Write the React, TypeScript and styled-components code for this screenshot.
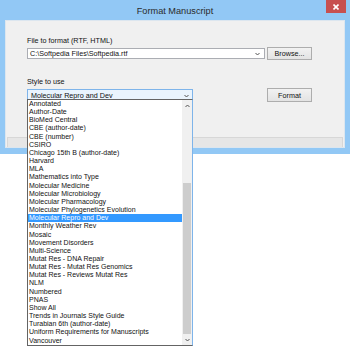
import React from 'react';
import styled, { createGlobalStyle } from 'styled-components';

const styleNames = [
  'Annotated',
  'Author-Date',
  'BioMed Central',
  'CBE (author-date)',
  'CBE (number)',
  'CSIRO',
  'Chicago 15th B (author-date)',
  'Harvard',
  'MLA',
  'Mathematics into Type',
  'Molecular Medicine',
  'Molecular Microbiology',
  'Molecular Pharmacology',
  'Molecular Phylogenetics Evolution',
  'Molecular Repro and Dev',
  'Monthly Weather Rev',
  'Mosaic',
  'Movement Disorders',
  'Multi-Science',
  'Mutat Res - DNA Repair',
  'Mutat Res - Mutat Res Genomics',
  'Mutat Res - Reviews Mutat Res',
  'NLM',
  'Numbered',
  'PNAS',
  'Show All',
  'Trends in Journals Style Guide',
  'Turabian 6th (author-date)',
  'Uniform Requirements for Manuscripts',
  'Vancouver',
];

const selected = 'Molecular Repro and Dev';

const GlobalStyle = createGlobalStyle`
  html, body {
    margin: 0;
    padding: 0;
    background: #ffffff;
  }
  body {
    font-family: 'Liberation Sans', Arial, sans-serif;
  }
`;

const Chevron: React.FC<{ up?: boolean }> = ({ up }) => (
  <svg width="5" height="4" viewBox="0 0 5 4">
    <polyline
      points={up ? '0.5,3 2.5,1 4.5,3' : '0.5,1 2.5,3 4.5,1'}
      fill="none"
      stroke="#555"
      strokeWidth="1"
    />
  </svg>
);

const App: React.FC = () => {
  return (
    <Page>
      <GlobalStyle />
      <Window>
        <TitleBar>
          <span />
          <Title>Format Manuscript</Title>
          <CloseButton>
            <svg width="6" height="6" viewBox="0 0 6 6">
              <path d="M0.5 0.5 L5.5 5.5 M5.5 0.5 L0.5 5.5" stroke="#fff" strokeWidth="1.6" />
            </svg>
          </CloseButton>
        </TitleBar>
        <Content>
          <Form>
            <Label>File to format (RTF, HTML)</Label>
            <FieldRow>
              <ComboInput>
                <span>C:\Softpedia Files\Softpedia.rtf</span>
                <Chevron />
              </ComboInput>
              <Button>Browse...</Button>
            </FieldRow>
            <Label $top={17}>Style to use</Label>
            <FieldRow $align="end">
              <Select>
                <span>{selected}</span>
                <Chevron />
              </Select>
              <Button $tall>Format</Button>
            </FieldRow>
          </Form>
          <Footer />
        </Content>
      </Window>
      <DropList>
        <Items>
          {styleNames.map((name) => (
            <Item key={name} $active={name === selected}>
              {name}
            </Item>
          ))}
        </Items>
        <ScrollBar>
          <ScrollArrow>
            <Chevron up />
          </ScrollArrow>
          <Track>
            <Thumb />
          </Track>
          <ScrollArrow>
            <Chevron />
          </ScrollArrow>
        </ScrollBar>
      </DropList>
    </Page>
  );
};

export default App;

const Page = styled.div`
  position: relative;
  width: 350px;
  height: 346px;
  overflow: hidden;
  background: #ffffff;
`;

const Window = styled.div`
  width: 350px;
  box-sizing: border-box;
  padding: 0 5px 6px;
  background: #92c8f5;
  display: flex;
  flex-direction: column;
`;

const TitleBar = styled.div`
  height: 20px;
  display: grid;
  grid-template-columns: 1fr auto 1fr;
  align-items: center;
`;

const Title = styled.div`
  font-size: 9.2px;
  color: #2b2b2b;
  padding-top: 1px;
`;

const CloseButton = styled.div`
  justify-self: end;
  align-self: start;
  margin-right: -1px;
  width: 20px;
  height: 13px;
  background: #c75050;
  display: flex;
  align-items: center;
  justify-content: center;
`;

const Content = styled.div`
  height: 128px;
  box-sizing: border-box;
  background: #f0f0f0;
  border: 1px solid #dce6ef;
  display: flex;
  flex-direction: column;
`;

const Form = styled.div`
  flex: 1;
  padding: 15px 0 0 21px;
  display: flex;
  flex-direction: column;
`;

const Label = styled.div<{ $top?: number }>`
  font-size: 7.2px;
  line-height: 9px;
  color: #111;
  margin-top: ${(p) => p.$top ?? 0}px;
  margin-bottom: 2px;
`;

const FieldRow = styled.div<{ $align?: string }>`
  display: grid;
  grid-template-columns: 238px 45px;
  column-gap: 2px;
  align-items: ${(p) => p.$align ?? 'center'};
`;

const ComboInput = styled.div`
  height: 11px;
  box-sizing: border-box;
  border: 1px solid #abadb3;
  background: #fff;
  display: flex;
  align-items: center;
  justify-content: space-between;
  padding: 0 4px 0 2px;
  font-size: 7.2px;
  color: #111;
`;

const Select = styled.div`
  width: 166px;
  height: 13px;
  box-sizing: border-box;
  border: 1px solid #7eb4ea;
  background: #eaf4fd;
  display: flex;
  align-items: center;
  justify-content: space-between;
  padding: 0 3px 0 3px;
  font-size: 7.2px;
  color: #111;
`;

const Button = styled.div<{ $tall?: boolean }>`
  height: ${(p) => (p.$tall ? 14 : 13)}px;
  box-sizing: border-box;
  border: 1px solid #adadad;
  background: linear-gradient(#f2f2f2, #e3e3e3);
  display: flex;
  align-items: center;
  justify-content: center;
  font-size: 7.2px;
  color: #111;
`;

const Footer = styled.div`
  height: 10px;
  margin: 0 1px 0 1px;
  box-sizing: border-box;
  background: #e6e6e6;
  border: 1px solid #d7d7d7;
  border-bottom: none;
`;

const DropList = styled.div`
  position: absolute;
  left: 27px;
  top: 99px;
  width: 166px;
  height: 247px;
  box-sizing: border-box;
  border: 1px solid #646464;
  border-right-color: #7eb4ea;
  background: #fff;
  display: flex;
`;

const Items = styled.div`
  flex: 1;
  display: flex;
  flex-direction: column;
`;

const Item = styled.div<{ $active?: boolean }>`
  height: 8.17px;
  line-height: 8.17px;
  padding-left: 1px;
  font-size: 7px;
  white-space: nowrap;
  color: ${(p) => (p.$active ? '#fff' : '#111')};
  background: ${(p) => (p.$active ? '#3399ff' : 'transparent')};
`;

const ScrollBar = styled.div`
  width: 10px;
  background: #f0f0f0;
  display: flex;
  flex-direction: column;
`;

const ScrollArrow = styled.div`
  height: 11px;
  display: flex;
  align-items: center;
  justify-content: center;
`;

const Track = styled.div`
  flex: 1;
  padding-top: 72px;
  display: flex;
  flex-direction: column;
`;

const Thumb = styled.div`
  flex: 1;
  margin: 0 1px;
  background: #cdcdcd;
`;
